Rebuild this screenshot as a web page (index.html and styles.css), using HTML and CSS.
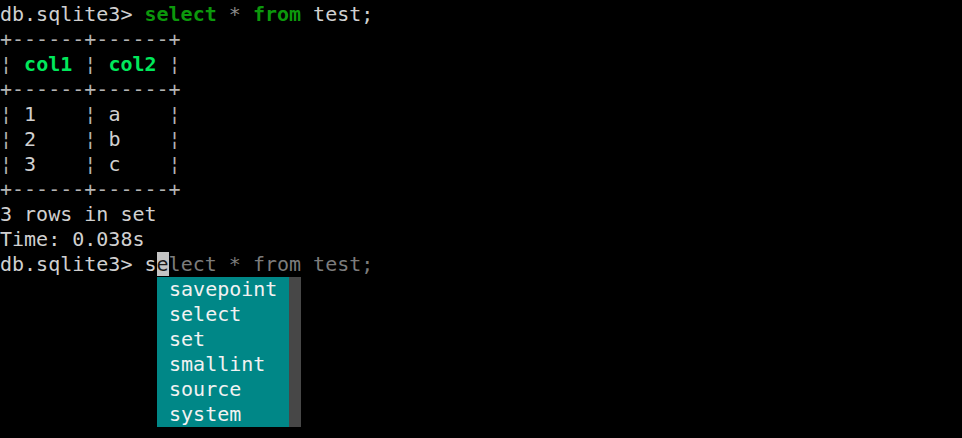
FILE: index.html
```html
<!DOCTYPE html>
<html>
<head>
<meta charset="utf-8">
<link rel="stylesheet" href="styles.css">
</head>
<body>
<div class="term">
  <div class="line"><span class="fg">db.sqlite3&gt; </span><span class="kw">select</span> <span class="op">*</span> <span class="kw">from</span> <span class="fg">test;</span></div>
  <div class="line tb">+------+------+</div>
  <div class="line tb">¦ <span class="hd">col1</span> ¦ <span class="hd">col2</span> ¦</div>
  <div class="line tb">+------+------+</div>
  <div class="line tb">¦ <span class="fg">1</span>    ¦ <span class="fg">a</span>    ¦</div>
  <div class="line tb">¦ <span class="fg">2</span>    ¦ <span class="fg">b</span>    ¦</div>
  <div class="line tb">¦ <span class="fg">3</span>    ¦ <span class="fg">c</span>    ¦</div>
  <div class="line tb">+------+------+</div>
  <div class="line fg">3 rows in set</div>
  <div class="line fg">Time: 0.038s</div>
  <div class="line"><span class="fg">db.sqlite3&gt; s</span><span class="cursor">e</span><span class="sug">lect * from test;</span></div>
  <div class="completions">
    <div class="choices">
      <div class="choice"> savepoint </div>
      <div class="choice"> select </div>
      <div class="choice"> set </div>
      <div class="choice"> smallint </div>
      <div class="choice"> source </div>
      <div class="choice"> system </div>
    </div>
    <div class="scrollbar"></div>
  </div>
</div>
</body>
</html>
```
FILE: styles.css
```css
html, body {
  margin: 0;
  padding: 0;
  background: #000;
  overflow: hidden;
}
.term {
  padding-top: 2px;
  font-family: "DejaVu Sans Mono", monospace;
  font-size: 20px;
  line-height: 25px;
  color: #d0d0d0;
}
.line {
  white-space: pre;
  height: 25px;
}
.fg { color: #d0d0d0; }
.kw { color: #0c980c; font-weight: bold; }
.op { color: #8a8a8a; }
.tb { color: #b4b4b4; }
.hd { color: #00e85c; font-weight: bold; }
.sug { color: #7c7c7c; }
.cursor {
  background: #c4c4c4;
  color: #1a1a1a;
}
.completions {
  margin-left: 157px;
  display: flex;
  width: 144px;
}
.choices {
  background: #008787;
  color: #f2f2f2;
  width: 132px;
}
.choice {
  white-space: pre;
  height: 25px;
}
.scrollbar {
  width: 12px;
  background: #474747;
}
```
